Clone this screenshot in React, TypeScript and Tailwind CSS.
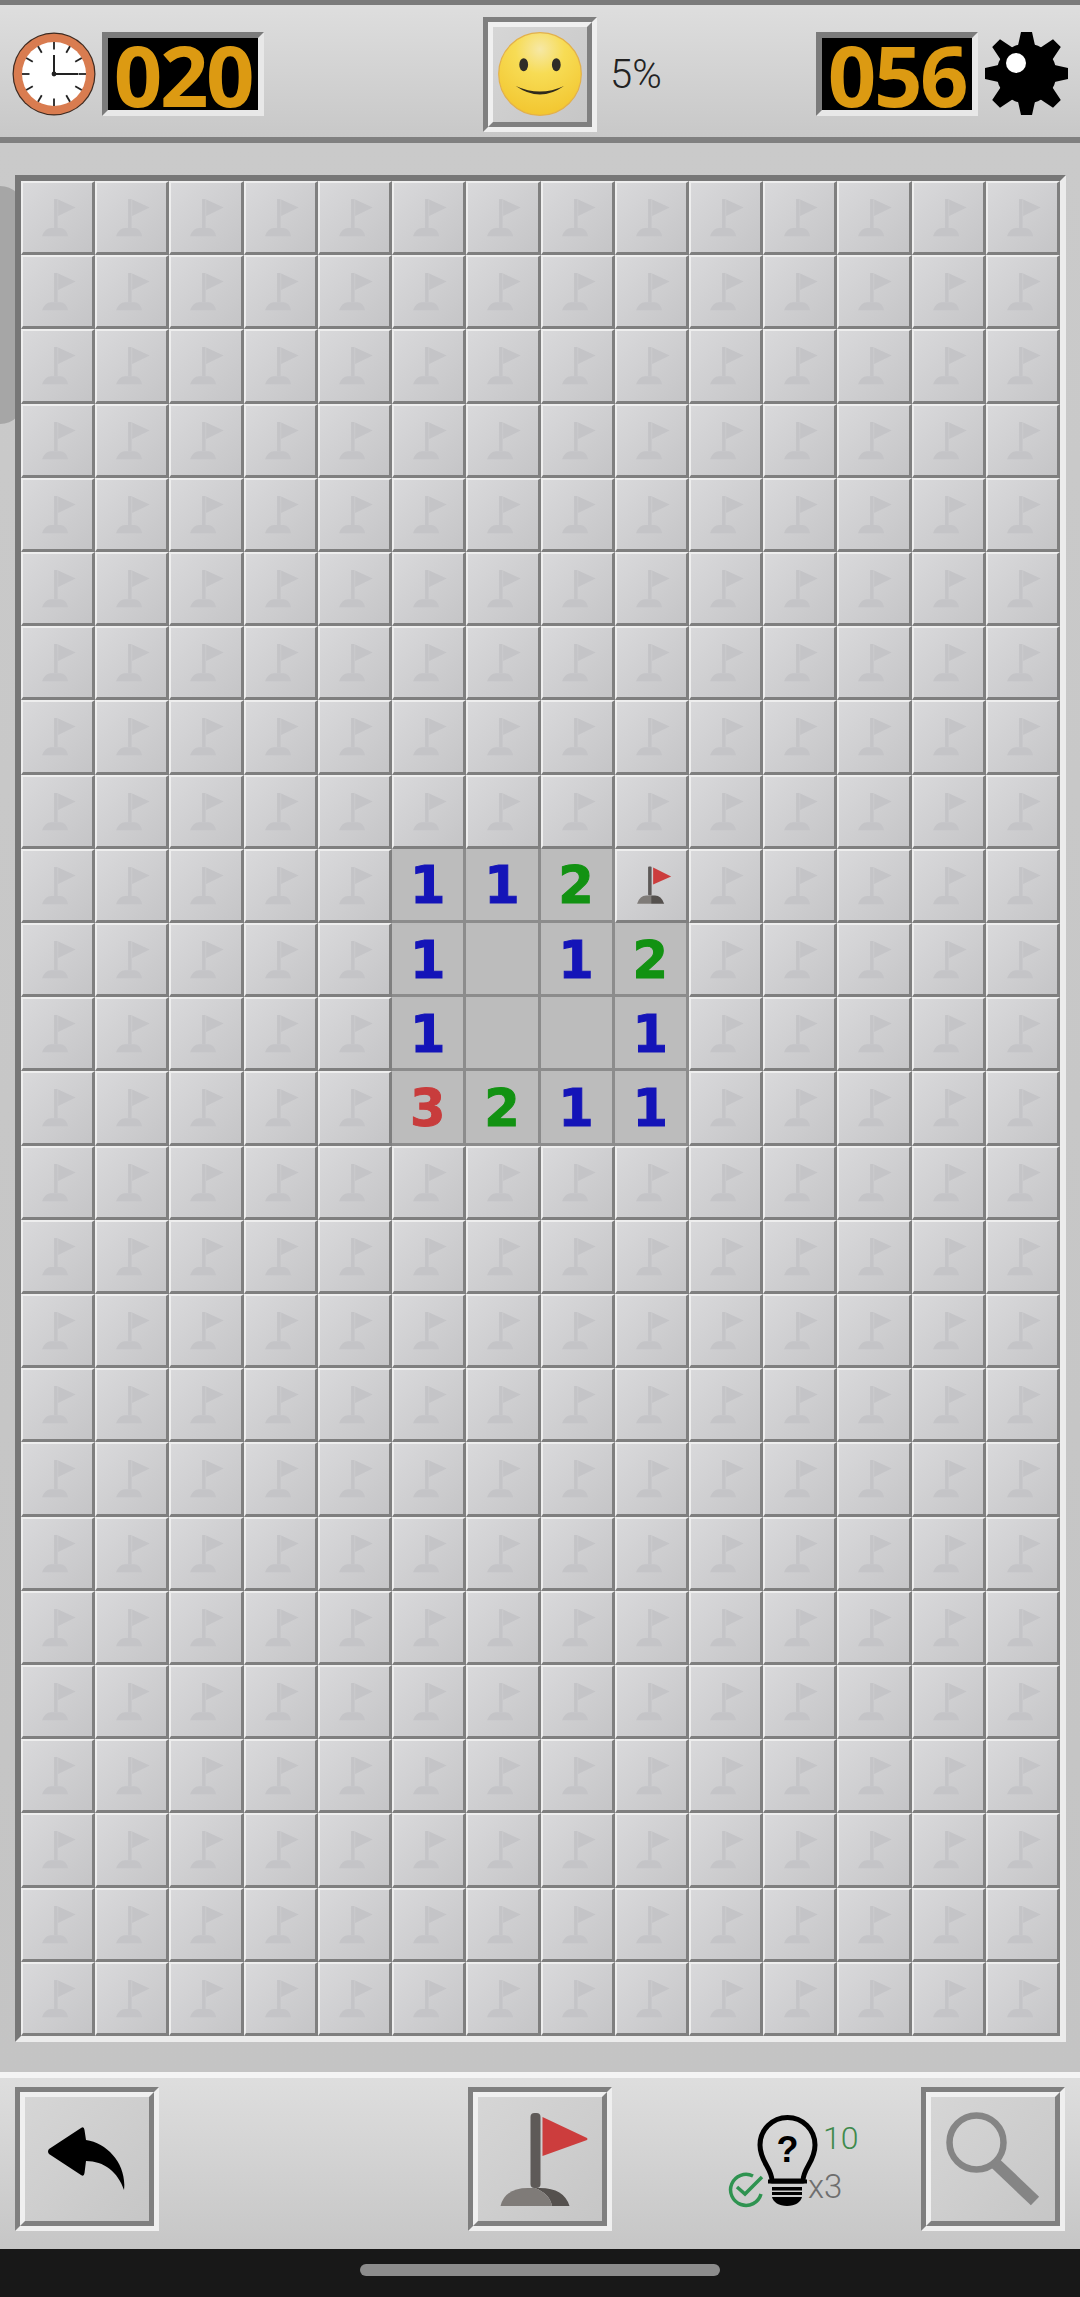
import React from 'react';

const COLS = 14;
const ROWS = 25;

// opened squares around the middle of the board, "row,col" -> value
const OPENED: Record<string, string> = {
    '9,5': '1', '9,6': '1', '9,7': '2',
    '10,5': '1', '10,6': '', '10,7': '1', '10,8': '2',
    '11,5': '1', '11,6': '', '11,7': '', '11,8': '1',
    '12,5': '3', '12,6': '2', '12,7': '1', '12,8': '1',
};

const NUM_COLOR: Record<string, string> = {
    '1': 'text-[#1414b8]',
    '2': 'text-[#129212]',
    '3': 'text-[#c83c3c]',
};

function MiniFlag({ ghost }: { ghost?: boolean }) {
    if (ghost) {
        return (
            <svg viewBox="2 2 69 69" className="block w-full h-full">
                <rect x="33" y="18" width="3.5" height="29" fill="#c4c4c7" />
                <path d="M37 18.500 L54.500 26.500 L37 35 Z" fill="#c4c4c7" />
                <path d="M21 55 Q24 47 30 47 H39 Q45 47 47 55 Z" fill="#c4c4c7" />
            </svg>
        );
    }
    return (
        <svg viewBox="2 3.500 69 69" className="block w-full h-full">
            <rect x="33" y="19" width="3.5" height="29" rx="1" fill="#5d5958" />
            <path d="M38 20 L56 29 L38 37 Z" fill="#cc3d3d" />
            <path d="M22 56 Q25 48 31 48 H36 V56 Z" fill="#7f7b78" />
            <path d="M36 48 H40 Q46 48 49 56 H36 Z" fill="#55514e" />
        </svg>
    );
}

function Cell({ row, col }: { row: number; col: number }) {
    const key = `${row},${col}`;
    if (key in OPENED) {
        const v = OPENED[key];
        return (
            <div className="flex items-center justify-center pt-[3px] bg-[#bcbcbc] border-r-[3px] border-b-[3px] border-[#8c8c8c]">
                <span className={`font-['DejaVu_Sans'] font-bold text-[51px] leading-none [-webkit-text-stroke:1px_currentColor] ${NUM_COLOR[v] ?? ''}`}>{v}</span>
            </div>
        );
    }
    return (
        <div className="bg-linear-to-br from-[#d9d9db] to-[#c5c5c7] border-t-2 border-l-2 border-t-[#eeeeee] border-l-[#eeeeee] border-r-[3px] border-b-[3px] border-r-[#7f7f7f] border-b-[#7f7f7f]">
            <MiniFlag ghost={!(row === 9 && col === 8)} />
        </div>
    );
}

// sunken box with the orange digits
function Counter({ value }: { value: string }) {
    return (
        <div className="w-[162px] h-[84px] border-[6px] border-t-[#7b7b7b] border-l-[#7b7b7b] border-r-[#e8e8e8] border-b-[#e8e8e8]">
            <div className="w-full h-full bg-black flex items-center justify-center">
                <span className="font-['Open_Sans'] font-bold text-[85px] leading-[72px] tracking-[-2.5px] text-[#dc9a12]">{value}</span>
            </div>
        </div>
    );
}

// raised button with the double bevel
function BevelButton({ className, children }: { className: string; children: React.ReactNode }) {
    return (
        <div className={`${className} shrink-0 border-[5px] border-t-[#7f7f7f] border-l-[#7f7f7f] border-r-[#efefef] border-b-[#efefef]`}>
            <div className="w-full h-full flex items-center justify-center border-[5px] border-t-[#f0f0f0] border-l-[#f0f0f0] border-r-[#808080] border-b-[#808080] bg-linear-to-br from-[#d6d6d6] to-[#c6c6c6]">
                {children}
            </div>
        </div>
    );
}

function ClockIcon() {
    const ticks = Array.from({ length: 12 }, (_, i) => (i * Math.PI) / 6);
    return (
        <svg viewBox="0 0 84 84" className="w-[84px] h-[84px] shrink-0">
            <circle cx="42" cy="42" r="41.5" fill="#3d2a20" />
            <circle cx="42" cy="42" r="40.3" fill="#d97c50" />
            <circle cx="42" cy="42" r="32" fill="#ffffff" />
            {ticks.map((a, i) => (
                <line
                    key={i}
                    x1={42 + Math.sin(a) * 32}
                    y1={42 - Math.cos(a) * 32}
                    x2={42 + Math.sin(a) * 24.5}
                    y2={42 - Math.cos(a) * 24.5}
                    stroke="#222"
                    strokeWidth="1.8"
                />
            ))}
            <path d="M42 23 V42 H66" fill="none" stroke="#222" strokeWidth="2" />
            <circle cx="42" cy="42" r="2.4" fill="#222" />
        </svg>
    );
}

function SmileyIcon() {
    return (
        <svg viewBox="0 0 84 84" className="w-[84px] h-[84px]">
            <defs>
                <radialGradient id="smile" cx="0.5" cy="0.2" r="0.85">
                    <stop offset="0" stopColor="#f6e8a6" />
                    <stop offset="0.35" stopColor="#f7dc55" />
                    <stop offset="1" stopColor="#f2c42c" />
                </radialGradient>
            </defs>
            <circle cx="42" cy="42" r="41.3" fill="url(#smile)" stroke="#e3b04a" strokeWidth="1.2" />
            <ellipse cx="25.7" cy="32.7" rx="4.4" ry="6.5" fill="#2f2c28" />
            <ellipse cx="58.3" cy="32.7" rx="4.4" ry="6.5" fill="#2f2c28" />
            <path d="M17.7 54 Q42 71 66 54 Q42 65 17.7 54 Z" fill="#2f2a1c" />
        </svg>
    );
}

function GearIcon() {
    const cx = 42.5;
    const cy = 41.5;
    const pts: string[] = [];
    const polar = (a: number, dx: number, r: number) => {
        const x = cx + Math.sin(a) * r + Math.cos(a) * dx;
        const y = cy - Math.cos(a) * r + Math.sin(a) * dx;
        return `${x.toFixed(2)},${y.toFixed(2)}`;
    };
    for (let i = 0; i < 8; i++) {
        const a = (i * Math.PI) / 4;
        const r = i % 2 ? 43 : 41.5;
        pts.push(polar(a, -8.5, 28), polar(a, -5.5, r), polar(a, 5.5, r), polar(a, 8.5, 28));
    }
    return (
        <svg viewBox="0 0 85 84" className="w-[85px] h-[84px] shrink-0">
            <polygon points={pts.join(' ')} fill="#000" />
            <circle cx={cx} cy={cy} r="30" fill="#000" />
            <circle cx="32" cy="31" r="10" fill="#fff" />
        </svg>
    );
}

function UndoIcon() {
    return (
        <svg viewBox="0 0 77 64" className="w-[77px] h-[64px] -ml-[1px] -mt-[1px]">
            <path
                d="M1 22 L33 1 Q36 -1 36.500 3 L38 13 C60 16 79 38 76 63 C70 45 56 34 38 34 L36.500 46 Q36 50 33 48 L1 27 Q-1 24.500 1 22 Z"
                fill="#000"
            />
        </svg>
    );
}

function BigFlag() {
    return (
        <svg viewBox="0 0 100 100" className="w-[100px] h-[100px]">
            <rect x="40.500" y="4" width="10" height="75" rx="4" fill="#5e5a58" />
            <path d="M52.500 8 L97 29 Q98 30 97 31 L52.500 47 Z" fill="#cc3d3d" />
            <path d="M10.500 97 Q15 79 38 79 H45 V97 Z" fill="#7f7b78" />
            <path d="M45 79 H50 Q74 79 79.500 97 H62 Q60 85 45 79 Z" fill="#55514e" />
            <path d="M45 79 Q60 85 62 97 H45 Z" fill="#7f7b78" />
        </svg>
    );
}

function SearchIcon() {
    return (
        <svg viewBox="0 0 100 100" className="w-[100px] h-[100px]">
            <circle cx="33.500" cy="33.500" r="27" fill="none" stroke="#858585" strokeWidth="6.500" />
            <line x1="51" y1="53" x2="92" y2="92" stroke="#858585" strokeWidth="12" />
        </svg>
    );
}

function HintBlock() {
    return (
        <div className="relative w-[129px] h-[92px] shrink-0 font-['Roboto'] font-light">
            <svg viewBox="0 0 62 92" className="absolute left-[29px] top-0 w-[62px] h-[92px]">
                <path
                    d="M15 67 C15 54 3 48 3 31 A27.500 27.500 0 0 1 58 31 C58 48 46 54 46 67 Z"
                    fill="none"
                    stroke="#000"
                    strokeWidth="5"
                    strokeLinejoin="round"
                />
                <path d="M11 67.500 H50" stroke="#000" strokeWidth="4" />
                <rect x="15" y="73" width="30" height="3.500" fill="#000" />
                <rect x="15" y="78" width="30" height="3" fill="#000" />
                <path d="M15 83 H45 C44 88 38 92 30 92 C22 92 16 88 15 83 Z" fill="#000" />
                <text x="30.500" y="48" textAnchor="middle" fontSize="36" fontWeight="700" fontFamily="'Liberation Sans', sans-serif" fill="#000">?</text>
            </svg>
            <svg viewBox="0 0 36 36" className="absolute left-0 top-[58px] w-[36px] h-[36px]">
                <path d="M33 22 A15.500 15.500 0 1 1 25 4" fill="none" stroke="#2e9350" strokeWidth="3.500" />
                <path d="M9 15 L17 22 L34 5" fill="none" stroke="#2e9350" strokeWidth="3.500" />
            </svg>
            <span className="absolute left-[95px] top-[4px] text-[32px] leading-[40px] text-[#3f8a4c]">10</span>
            <span className="absolute left-[80px] top-[53px] text-[33px] leading-[40px] text-[#6e6e6e]">x3</span>
        </div>
    );
}

export default function App() {
    return (
        <div className="w-[1080px] h-[2297px] flex flex-col overflow-hidden bg-[#c8c8c8] font-['Roboto',sans-serif]">
            {/* top bar */}
            <header className="h-[143px] shrink-0 flex items-center pt-[6px] pl-[12px] border-t-[5px] border-b-[6px] border-t-[#7b7b7b] border-b-[#808080] bg-linear-to-b from-[#dedede] to-[#c8c8c8]">
                <ClockIcon />
                <div className="ml-[6px]">
                    <Counter value="020" />
                </div>
                <BevelButton className="ml-[219px] w-[114px] h-[115px]">
                    <SmileyIcon />
                </BevelButton>
                <span className="ml-[13px] w-[206px] text-[40px] leading-none font-light text-[#222] pt-[2px]">5%</span>
                <Counter value="056" />
                <div className="ml-[6px]">
                    <GearIcon />
                </div>
            </header>

            {/* board */}
            <main className="relative flex-1 pt-[32px] pl-[15px] bg-linear-to-b from-[#cacaca] to-[#c4c4c4]">
                <div className="absolute left-0 top-[43px] w-[24px] h-[238px] rounded-r-[24px] bg-[#a6a6a6]" />
                <div className="relative w-[1051px] border-[6px] border-t-[#777777] border-l-[#777777] border-r-[#ececec] border-b-[#ececec]">
                    <div className="grid grid-cols-14 grid-rows-25 w-[1039px] h-[1855px]">
                        {Array.from({ length: ROWS }, (_, r) =>
                            Array.from({ length: COLS }, (_, c) => <Cell key={`${r}-${c}`} row={r} col={c} />)
                        )}
                    </div>
                </div>
            </main>

            {/* bottom tools */}
            <footer className="h-[177px] shrink-0 flex items-start pl-[15px] pt-[9px] border-t-[6px] border-t-[#f4f4f4] bg-linear-to-b from-[#dedede] to-[#c6c6c6]">
                <BevelButton className="w-[144px] h-[144px]">
                    <UndoIcon />
                </BevelButton>
                <BevelButton className="ml-[309px] w-[144px] h-[144px]">
                    <BigFlag />
                </BevelButton>
                <div className="ml-[116px] mt-[27px]">
                    <HintBlock />
                </div>
                <BevelButton className="ml-[64px] w-[144px] h-[144px]">
                    <SearchIcon />
                </BevelButton>
            </footer>

            {/* android nav bar */}
            <div className="h-[48px] shrink-0 flex justify-center pt-[15px] bg-[#181818]">
                <div className="w-[360px] h-[12px] rounded-full bg-[#8c8c8c]" />
            </div>
        </div>
    );
}
